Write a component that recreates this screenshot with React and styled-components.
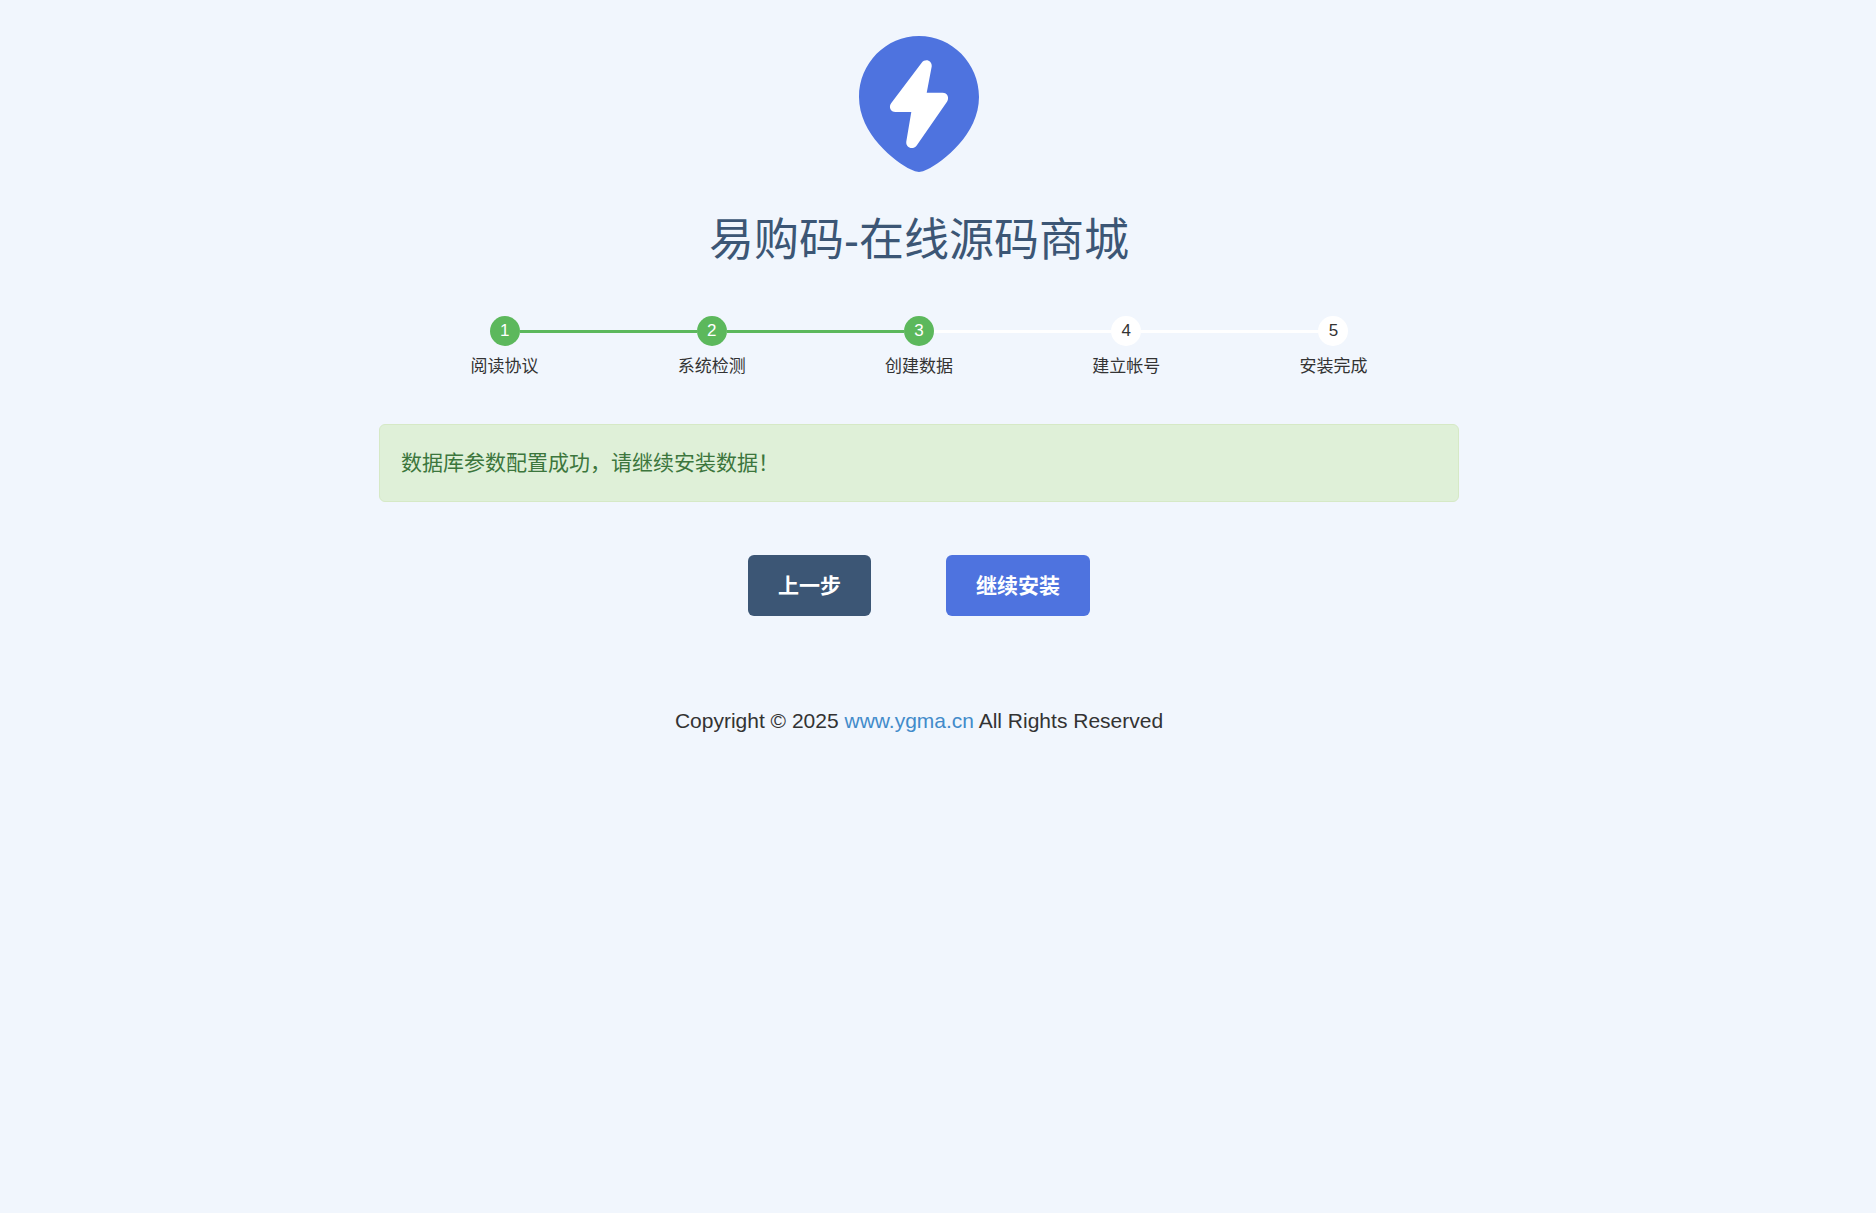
import React from 'react';
import styled, { createGlobalStyle } from 'styled-components';

const GlobalStyle = createGlobalStyle`
  * {
    box-sizing: border-box;
  }

  body {
    margin: 0;
    background-color: #f1f6fd;
    color: #333;
    font-family: 'Liberation Sans', 'Noto Sans CJK SC', sans-serif;
    font-size: 21px;
    line-height: 30px;
  }
`;

const Page = styled.div`
  padding: 36px 38px 36px 0;
`;

const Container = styled.div`
  max-width: 1080px;
  margin: 0 auto;
  display: flex;
  flex-direction: column;
`;

const Header = styled.header`
  display: flex;
  flex-direction: column;
  align-items: center;
  gap: 39px;
`;

const Title = styled.h1`
  margin: 0;
  color: #3c5675;
  font-size: 45px;
  font-weight: 400;
  line-height: 60px;
`;

const Steps = styled.ol`
  margin: 45px 0;
  padding: 0 22px;
  display: flex;
  list-style: none;
`;

const StepItem = styled.li`
  flex: 1;
  display: flex;
  flex-direction: column;
  gap: 9px;
`;

const StepTrack = styled.div`
  display: flex;
  align-items: center;
`;

const StepLine = styled.span`
  flex: 1;
  height: 3px;
  background-color: ${props => props.$color};
`;

const StepNumber = styled.span`
  width: 30px;
  height: 30px;
  border-radius: 50%;
  background-color: ${props => (props.$done ? '#5cb85c' : '#fff')};
  color: ${props => (props.$done ? '#fff' : '#333')};
  font-size: 17px;
  text-align: center;
`;

const StepLabel = styled.span`
  font-size: 17px;
  line-height: 24px;
  text-align: center;
`;

const Alert = styled.div`
  padding: 23px 21px;
  border: 1px solid #d6e9c6;
  border-radius: 6px;
  background-color: #dff0d8;
  color: #3c763d;
`;

const Actions = styled.div`
  margin: 53px 0 90px;
  display: flex;
  justify-content: center;
  gap: 75px;
`;

const Button = styled.button`
  padding: 15px 30px;
  border: 0;
  border-radius: 6px;
  background-color: ${props => (props.$primary ? '#4e73df' : '#3c5675')};
  color: #fff;
  font-family: inherit;
  font-size: 21px;
  font-weight: 700;
  line-height: 31px;
  cursor: pointer;
`;

const Footer = styled.footer`
  text-align: center;
`;

const FooterLink = styled.a`
  color: #428bca;
  text-decoration: none;
`;

const steps = ['阅读协议', '系统检测', '创建数据', '建立帐号', '安装完成'];
const current = 3;

const lineColor = (from, to) => {
  if (from < 1 || to > steps.length) return 'transparent';
  return to <= current ? '#5cb85c' : '#fff';
};

const Logo = () => (
  <svg width="120" height="136" viewBox="0 0 120 136" aria-hidden="true">
    <path
      fill="#4e73df"
      d="M60 0C93 0 120 27.300 120 61C120 98 84 126 68 133.600Q60 138.400 52 133.600C36 126 0 98 0 61C0 27.300 27 0 60 0Z"
    />
    <path
      fill="#fff"
      d="M62.700 26.700C66.500 21.800 73.400 24.800 72.700 30.500L67.700 56.700H83.500C88.500 56.700 90.600 61.700 88 65.700L57.700 109.500C53.700 114.500 46.500 111.700 47.300 105.500L52.300 76H36.500C31.500 76 29.300 71 32.300 67Z"
    />
  </svg>
);

const App = () => (
  <Page>
    <GlobalStyle />
    <Container>
      <Header>
        <Logo />
        <Title>易购码-在线源码商城</Title>
      </Header>

      <Steps>
        {steps.map((label, i) => (
          <StepItem key={label} aria-current={i + 1 === current ? 'step' : undefined}>
            <StepTrack>
              <StepLine $color={lineColor(i, i + 1)} />
              <StepNumber $done={i + 1 <= current}>{i + 1}</StepNumber>
              <StepLine $color={lineColor(i + 1, i + 2)} />
            </StepTrack>
            <StepLabel>{label}</StepLabel>
          </StepItem>
        ))}
      </Steps>

      <Alert role="alert">数据库参数配置成功，请继续安装数据！</Alert>

      <Actions>
        <Button type="button">上一步</Button>
        <Button type="button" $primary>
          继续安装
        </Button>
      </Actions>

      <Footer>
        Copyright © 2025 <FooterLink href="#">www.ygma.cn</FooterLink> All Rights Reserved
      </Footer>
    </Container>
  </Page>
);

export default App;
